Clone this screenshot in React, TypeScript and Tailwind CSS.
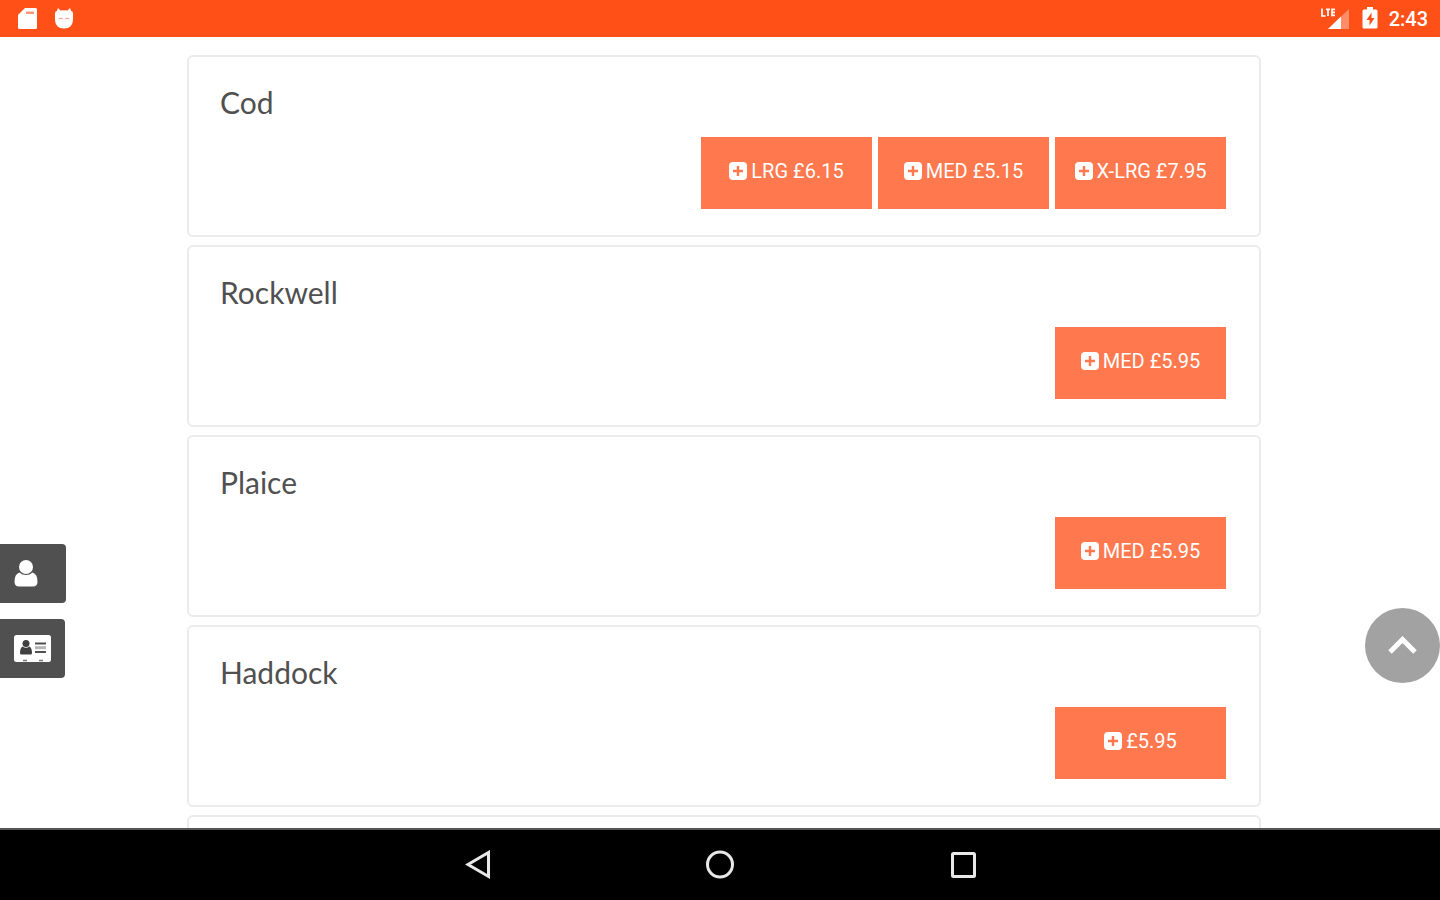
import React from "react";

type Item = { name: string; options: string[] };

const items: Item[] = [
  { name: "Cod", options: ["LRG £6.15", "MED £5.15", "X-LRG £7.95"] },
  { name: "Rockwell", options: ["MED £5.95"] },
  { name: "Plaice", options: ["MED £5.95"] },
  { name: "Haddock", options: ["£5.95"] },
];

function PlusSquareIcon() {
  return (
    <svg className="size-[18px] shrink-0" viewBox="0 0 18 18" aria-hidden="true">
      <rect width="18" height="18" rx="4" fill="#fff" />
      <path d="M9 4v10M4 9h10" stroke="#ff784e" strokeWidth="2.4" />
    </svg>
  );
}

function StatusBar() {
  return (
    <header className="flex h-[37px] shrink-0 items-center justify-between bg-[#ff5018] pl-[18px] pr-3 text-white">
      <div className="flex items-center gap-4">
        <svg className="h-[22px] w-5" viewBox="0 0 20 22" aria-hidden="true">
          <path d="M7 0h10.500q1.500 0 1.500 1.500v18q0 1.500-1.500 1.500h-16Q0 21 0 19.500V7z" fill="#fff" />
          <path d="M8 3.500h8v2.500H8z" fill="#ff9674" />
        </svg>
        <svg className="h-[22px] w-5" viewBox="0 0 20 22" aria-hidden="true">
          <path
            d="M4 0l2.500 2.600Q10 1.700 13.500 2.600L16 0l1 2.800q2 .7 2 2.700v6q0 9-9 9t-9-9v-6q0-2 2-2.700z"
            fill="#fff"
          />
          <path d="M4.500 11l2.500-.9 2 .9M11 11l2-.9 2.500.9" fill="none" stroke="#ffae93" strokeWidth="1.200" />
        </svg>
      </div>
      <div className="flex items-center gap-[11px]">
        <svg className="h-[24px] w-[30px]" viewBox="0 0 30 24" aria-hidden="true">
          <path d="M28 2v20H7z" fill="#fff" opacity=".35" />
          <path d="M20 9.600V22H7z" fill="#fff" />
          <path d="M1 1.500V9h3.500M5 2.300h4M7 2.300V9M14 2.300h-3v6h3M11 5.300h3" fill="none" stroke="#fff" strokeWidth="1.700" />
        </svg>
        <svg className="h-[24px] w-4" viewBox="0 0 16 24" aria-hidden="true">
          <path d="M5 0h6v2.500h3q1.500 0 1.500 1.500v16q0 1.500-1.500 1.500H2Q.5 21.500.5 20V4q0-1.500 1.500-1.500h3z" fill="#fff" />
          <path d="M9.500 5.500l-5 7.500h3v5.500l5-7.500h-3z" fill="#ff5018" />
        </svg>
        <span className="font-['Roboto',sans-serif] text-[20px] font-medium leading-6">2:43</span>
      </div>
    </header>
  );
}

function MenuCard({ item }: { item: Item }) {
  return (
    <li className="flex h-[182px] flex-col rounded-md border-2 border-[#ebebeb] pl-[31px] pr-[33px] pt-[26px]">
      <h2 className="font-['Lato',sans-serif] text-[30px] leading-[38px] text-[#505050]">{item.name}</h2>
      <div className="mt-4 flex justify-end gap-[6px]">
        {item.options.map((label) => (
          <button
            key={label}
            type="button"
            className="flex h-[72px] w-[171px] items-center justify-center gap-1 whitespace-nowrap bg-[#ff784e] pb-1 font-['Roboto',sans-serif] text-[20px] leading-6 text-white"
          >
            <PlusSquareIcon />
            {label}
          </button>
        ))}
      </div>
    </li>
  );
}

function SideButtons() {
  return (
    <div className="absolute bottom-[150px] left-0 flex flex-col items-start gap-4">
      <button type="button" aria-label="Account" className="flex h-[59px] w-[66px] items-center rounded-r bg-[#505050] pl-[14px]">
        <svg className="h-[28px] w-6" viewBox="0 0 24 28" aria-hidden="true">
          <path
            d="M5.500 12.500Q8 15 12 15t6.500-2.500Q23.500 14 23.500 21.500 23.500 26.500 19 26.500H5Q.5 26.500.5 21.500.5 14 5.500 12.500z"
            fill="#fff"
          />
          <circle cx="12" cy="7" r="7" fill="#fff" />
        </svg>
      </button>
      <button type="button" aria-label="Contact details" className="flex h-[59px] w-[65px] items-center rounded-r bg-[#505050] pl-[14px]">
        <svg className="h-[28px] w-[37px]" viewBox="0 0 37 28" aria-hidden="true">
          <rect width="37" height="27" rx="2.500" fill="#fff" />
          <circle cx="12" cy="8.500" r="3.500" fill="#404040" />
          <path d="M8.500 11.500q3.500 2.500 7 0 2.500 1.500 2.500 6.500 0 1.500-1.500 1.500h-9Q6 19.500 6 18q0-5 2.500-6.500z" fill="#404040" />
          <path d="M21 8.500h11M21 17h11" stroke="#505050" strokeWidth="2" />
          <path d="M21 12.700h11" stroke="#b5b5b5" strokeWidth="3" />
          <path d="M9 25.500h4M25 25.500h4" stroke="#777" strokeWidth="1.500" />
        </svg>
      </button>
    </div>
  );
}

function NavBar() {
  return (
    <nav className="flex h-[72px] shrink-0 items-center justify-center gap-[214px] border-t-2 border-[#555] bg-black">
      <button type="button" aria-label="Back">
        <svg className="size-[30px]" viewBox="0 0 30 30" fill="none" stroke="#e8e8e8" strokeWidth="3" aria-hidden="true">
          <path d="M27.500 2.500v24L7 14.500z" />
        </svg>
      </button>
      <button type="button" aria-label="Home">
        <svg className="size-[30px]" viewBox="0 0 30 30" fill="none" stroke="#e8e8e8" strokeWidth="3" aria-hidden="true">
          <circle cx="15" cy="14.500" r="12.500" />
        </svg>
      </button>
      <button type="button" aria-label="Recent apps">
        <svg className="size-[30px]" viewBox="0 0 30 30" fill="none" stroke="#e8e8e8" strokeWidth="3" aria-hidden="true">
          <rect x="3.500" y="3.500" width="22" height="23" rx="1" />
        </svg>
      </button>
    </nav>
  );
}

export default function App() {
  return (
    <div className="flex h-screen flex-col bg-white">
      <StatusBar />
      <div className="relative min-h-0 flex-1">
        <main className="h-full overflow-hidden pl-[187px] pr-[179px] pt-[18px]">
          <ul className="flex flex-col gap-2">
            {items.map((item) => (
              <MenuCard key={item.name} item={item} />
            ))}
            <li className="h-[182px] rounded-md border-2 border-[#ebebeb]" />
          </ul>
        </main>
        <SideButtons />
        <button
          type="button"
          aria-label="Scroll to top"
          className="absolute bottom-[145px] right-0 flex size-[75px] items-center justify-center rounded-full bg-[#a2a2a2]"
        >
          <svg className="h-5 w-8" viewBox="0 0 32 20" fill="none" stroke="#fff" strokeWidth="5" aria-hidden="true">
            <path d="M3 16L15.500 3.500 28 16" />
          </svg>
        </button>
      </div>
      <NavBar />
    </div>
  );
}
